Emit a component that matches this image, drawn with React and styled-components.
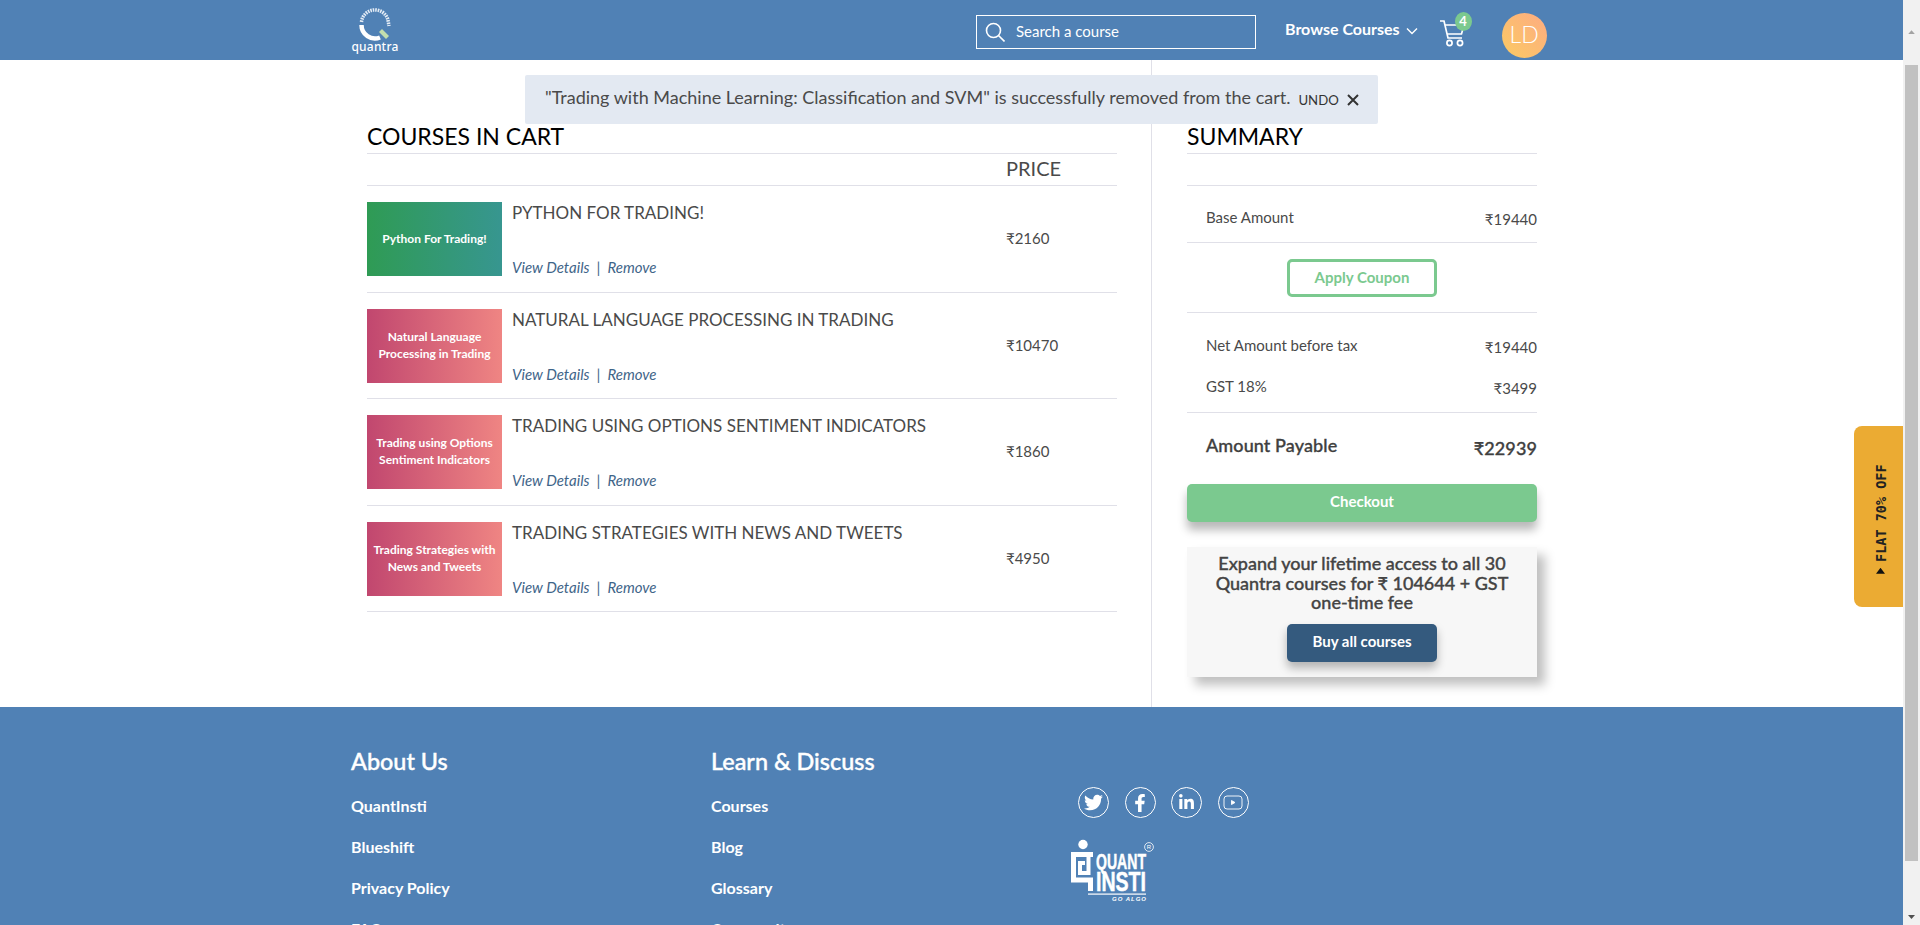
import React from "react";
import styled, { createGlobalStyle } from "styled-components";
import { FaTwitter, FaFacebookF, FaLinkedinIn } from "react-icons/fa";

const courses = [
  { thumb: "Python For Trading!", title: "PYTHON FOR TRADING!", price: "₹2160", green: true },
  { thumb: "Natural Language Processing in Trading", title: "NATURAL LANGUAGE PROCESSING IN TRADING", price: "₹10470" },
  { thumb: "Trading using Options Sentiment Indicators", title: "TRADING USING OPTIONS SENTIMENT INDICATORS", price: "₹1860" },
  { thumb: "Trading Strategies with News and Tweets", title: "TRADING STRATEGIES WITH NEWS AND TWEETS", price: "₹4950" },
];

const aboutLinks = ["QuantInsti", "Blueshift", "Privacy Policy", "FAQs"];
const learnLinks = ["Courses", "Blog", "Glossary", "Community"];

export default function App() {
  return (
    <>
      <GlobalStyle />
      <Page>
        <Header>
          <Logo>
            <svg width="34" height="33" viewBox="0 0 34 33" fill="none">
              <path d="M3.5 14 A13.5 13.5 0 0 1 30 12 L31 18" stroke="#e4ecf5" strokeWidth="3.5" strokeDasharray="1.6 0.9" />
              <path d="M3.5 17 A13.5 13.5 0 0 0 22 29.5" stroke="#fff" strokeWidth="4.5" />
              <path d="M24 21 l7 7 l-3 3 l-7 -7 z" fill="#c3dfae" />
            </svg>
            <LogoText>quantra</LogoText>
          </Logo>
          <SearchBox>
            <svg width="20" height="20" viewBox="0 0 20 20" fill="none" stroke="#fff" strokeWidth="1.6">
              <circle cx="8.5" cy="8.5" r="7" />
              <path d="M13.5 13.5l6 6" />
            </svg>
            <span>Search a course</span>
          </SearchBox>
          <Browse>
            Browse Courses
            <svg width="12" height="8" viewBox="0 0 12 8" fill="none" stroke="#fff" strokeWidth="1.4">
              <path d="M1 1.5l5 5 5-5" />
            </svg>
          </Browse>
          <Cart>
            <svg width="26" height="30" viewBox="0 0 26 30" fill="none" stroke="#fff" strokeWidth="1.7">
              <path d="M0 3h4l4 17h14" />
              <path d="M5 7h19l-2.5 9H7" />
              <circle cx="9.5" cy="25" r="2.6" />
              <circle cx="20" cy="25" r="2.6" />
            </svg>
            <Badge>4</Badge>
          </Cart>
          <Avatar>LD</Avatar>
        </Header>

        <Toast>
          <span>"Trading with Machine Learning: Classification and SVM" is successfully removed from the cart.</span>
          <Undo>UNDO</Undo>
          <svg width="12" height="12" viewBox="0 0 12 12" stroke="#333" strokeWidth="2">
            <path d="M1 1l10 10M11 1L1 11" />
          </svg>
        </Toast>

        <Main>
          <CartColumn>
            <SectionTitle>COURSES IN CART</SectionTitle>
            <PriceHead>PRICE</PriceHead>
            {courses.map((c) => (
              <CourseRow key={c.title}>
                <Thumb $green={c.green}>{c.thumb}</Thumb>
                <CourseInfo>
                  <CourseTitle>{c.title}</CourseTitle>
                  <CourseLinks>
                    View Details<Sep>|</Sep>Remove
                  </CourseLinks>
                </CourseInfo>
                <Price>{c.price}</Price>
              </CourseRow>
            ))}
          </CartColumn>

          <SummaryColumn>
            <SectionTitle>SUMMARY</SectionTitle>
            <SummaryGap />
            <SummaryBlock $h={57} $top={21}>
              <SummaryRow>
                <span>Base Amount</span>
                <Amount>₹19440</Amount>
              </SummaryRow>
            </SummaryBlock>
            <CouponBlock>
              <CouponButton>Apply Coupon</CouponButton>
            </CouponBlock>
            <SummaryBlock $h={100} $top={22}>
              <SummaryRow>
                <span>Net Amount before tax</span>
                <Amount>₹19440</Amount>
              </SummaryRow>
              <SummaryRow>
                <span>GST 18%</span>
                <Amount>₹3499</Amount>
              </SummaryRow>
            </SummaryBlock>
            <PayableRow>
              <span>Amount Payable</span>
              <PayableAmount>₹22939</PayableAmount>
            </PayableRow>
            <Checkout>Checkout</Checkout>
            <UpsellCard>
              <UpsellText>Expand your lifetime access to all 30 Quantra courses for ₹ 104644 + GST one-time fee</UpsellText>
              <BuyAll>Buy all courses</BuyAll>
            </UpsellCard>
          </SummaryColumn>
        </Main>

        <Footer>
          <FooterColumn>
            <FooterTitle>About Us</FooterTitle>
            {aboutLinks.map((l) => (
              <FooterLink key={l}>{l}</FooterLink>
            ))}
          </FooterColumn>
          <FooterColumn>
            <FooterTitle>Learn &amp; Discuss</FooterTitle>
            {learnLinks.map((l) => (
              <FooterLink key={l}>{l}</FooterLink>
            ))}
          </FooterColumn>
          <FooterSide>
            <Socials>
              <Social><FaTwitter size={19} /></Social>
              <Social><FaFacebookF size={18} /></Social>
              <Social><FaLinkedinIn size={17} /></Social>
              <Social>
                <svg width="20" height="15" viewBox="0 0 20 15" fill="none" stroke="#fff" strokeWidth="0.9">
                  <rect x="1" y="1" width="18" height="13" rx="3" />
                  <path d="M8.5 5.5l3.5 2-3.5 2z" fill="#fff" />
                </svg>
              </Social>
            </Socials>
            <svg width="85" height="63" viewBox="0 0 85 63">
              <circle cx="12" cy="5.5" r="4.7" fill="#fff" />
              <path d="M22 15.5H2.5V41H19.5V52" fill="none" stroke="#fff" strokeWidth="5" />
              <path d="M14 24H9V34H17.5V17" fill="none" stroke="#fff" strokeWidth="4" />
              <circle cx="78" cy="8" r="4.4" fill="none" stroke="#fff" strokeWidth="0.8" />
              <text x="78" y="10" fontSize="6" fill="#fff" textAnchor="middle" fontFamily="Liberation Sans">R</text>
              <text x="25" y="30" fontSize="22" fontWeight="700" fill="#fff" stroke="#fff" strokeWidth="0.5" textLength="50" lengthAdjust="spacingAndGlyphs" fontFamily="Liberation Sans">QUANT</text>
              <text x="25" y="52" fontSize="27" fontWeight="700" fill="#fff" stroke="#fff" strokeWidth="0.5" textLength="50" lengthAdjust="spacingAndGlyphs" fontFamily="Liberation Sans">INSTI</text>
              <rect x="17" y="54.5" width="58" height="1.2" fill="#fff" />
              <text x="41" y="62" fontSize="6" fontWeight="700" fontStyle="italic" fill="#fff" textLength="34" fontFamily="Liberation Sans">GO ALGO</text>
            </svg>
          </FooterSide>
        </Footer>

        <OfferTab>
          <OfferArrow />
          FLAT 70% OFF
        </OfferTab>
        <ScrollTrack>
          <ScrollArrow $up />
          <ScrollThumb />
          <ScrollArrow />
        </ScrollTrack>
      </Page>
    </>
  );
}

const GlobalStyle = createGlobalStyle`
  html, body {
    margin: 0;
    padding: 0;
    height: 100%;
    overflow: hidden;
    background: #fff;
  }
  * {
    box-sizing: border-box;
  }
  body {
    font-family: Lato, "Liberation Sans", sans-serif;
    color: #4a4a4a;
  }
`;

const Page = styled.div`
  position: relative;
  width: 1903px;
  height: 925px;
  overflow: hidden;
`;

const Header = styled.header`
  height: 60px;
  background: #5081b5;
  display: flex;
  align-items: center;
  padding-left: 352px;
  color: #fff;
`;

const Logo = styled.div`
  width: 46px;
  display: flex;
  flex-direction: column;
  align-items: center;
  margin-right: 578px;
`;

const LogoText = styled.div`
  font-family: "Noto Sans", sans-serif;
  font-size: 12px;
  font-weight: 500;
  line-height: 12px;
  letter-spacing: 0.2px;
`;

const SearchBox = styled.div`
  width: 280px;
  height: 34px;
  border: 1px solid #fff;
  display: flex;
  align-items: center;
  gap: 11px;
  padding: 0 0 0 8px;
  font-size: 15px;
  margin-right: 29px;
  margin-top: 4px;
  span {
    margin-bottom: 2px;
  }
`;

const Browse = styled.div`
  display: flex;
  align-items: center;
  gap: 6px;
  font-size: 16px;
  font-weight: 700;
  margin-right: 22px;
  margin-bottom: 4px;
  svg {
    margin-top: 5px;
  }
`;

const Cart = styled.div`
  position: relative;
  width: 26px;
  height: 30px;
  margin-right: 36px;
  margin-top: 6px;
`;

const Badge = styled.div`
  position: absolute;
  left: 15px;
  top: -6px;
  width: 17px;
  height: 19px;
  border-radius: 50%;
  background: #7bc98f;
  color: #fff;
  font-size: 13px;
  font-weight: 700;
  line-height: 18px;
  text-align: center;
`;

const Avatar = styled.div`
  width: 45px;
  height: 45px;
  margin-top: 11px;
  padding-bottom: 4px;
  border-radius: 50%;
  background: linear-gradient(45deg, #fbcb63, #fdab82);
  display: flex;
  align-items: center;
  justify-content: center;
  font-size: 23px;
  font-weight: 300;
`;

const Toast = styled.div`
  position: absolute;
  left: 525px;
  top: 75px;
  width: 853px;
  height: 49px;
  border-radius: 2px;
  background: #e3e9f2;
  display: flex;
  align-items: center;
  padding: 0 0 5px 20px;
  font-size: 18px;
  color: #4a4a4a;
  svg {
    margin-left: 8px;
    margin-top: 5px;
  }
`;

const Undo = styled.span`
  font-size: 13.2px;
  color: #333;
  margin-left: 8px;
  margin-top: 5px;
`;

const Main = styled.main`
  height: 647px;
  display: flex;
  padding-left: 367px;
`;

const CartColumn = styled.section`
  width: 750px;
  padding-top: 62px;
`;

const SummaryColumn = styled.section`
  width: 386px;
  margin-left: 34px;
  border-left: 1px solid #e0e0e8;
  padding: 62px 0 0 35px;
`;

const SectionTitle = styled.h2`
  margin: 0;
  height: 32px;
  line-height: 29px;
  font-size: 23px;
  font-weight: 400;
  color: #000;
  border-bottom: 1px solid #e0e0e8;
`;

const PriceHead = styled.div`
  height: 32px;
  line-height: 29px;
  padding-left: 639px;
  font-size: 20px;
  border-bottom: 1px solid #e0e0e8;
`;

const CourseRow = styled.div`
  height: 106.6px;
  display: flex;
  padding-top: 16px;
  border-bottom: 1px solid #e0e0e8;
`;

const Thumb = styled.div`
  width: 135px;
  height: 74px;
  flex: none;
  display: flex;
  align-items: center;
  justify-content: center;
  text-align: center;
  padding: 0 6px 2px;
  color: #fff;
  font-size: 12px;
  font-weight: 700;
  line-height: 17px;
  background: ${(p) =>
    p.$green
      ? "linear-gradient(90deg, #2f9b54, #379690)"
      : "linear-gradient(90deg, #c1476f, #ef8583)"};
`;

const CourseInfo = styled.div`
  width: 504px;
  height: 74px;
  padding-left: 10px;
  display: flex;
  flex-direction: column;
  justify-content: space-between;
`;

const CourseTitle = styled.div`
  font-size: 17px;
  line-height: 21px;
`;

const CourseLinks = styled.div`
  font-size: 15px;
  font-style: italic;
  color: #3f6589;
  line-height: 18px;
`;

const Sep = styled.span`
  margin: 0 7px;
`;

const Price = styled.div`
  font-size: 15px;
  line-height: 72px;
`;

const SummaryGap = styled.div`
  height: 32px;
  border-bottom: 1px solid #e0e0e8;
`;

const SummaryBlock = styled.div`
  height: ${(p) => p.$h}px;
  padding: ${(p) => p.$top}px 0 0 19px;
  border-bottom: 1px solid #e0e0e8;
  display: flex;
  flex-direction: column;
  gap: 19px;
`;

const SummaryRow = styled.div`
  display: flex;
  justify-content: space-between;
  font-size: 15px;
  line-height: 20px;
`;

const Amount = styled.span`
  margin-top: 2px;
`;

const CouponBlock = styled.div`
  height: 70px;
  display: flex;
  justify-content: center;
  padding-top: 16px;
  border-bottom: 1px solid #e0e0e8;
`;

const CouponButton = styled.div`
  width: 150px;
  height: 38px;
  border: 3px solid #7bc98f;
  border-radius: 5px;
  color: #7bc98f;
  font-size: 15px;
  font-weight: 700;
  text-align: center;
  line-height: 30px;
`;

const PayableRow = styled.div`
  height: 71px;
  display: flex;
  justify-content: space-between;
  align-items: flex-start;
  padding: 21px 0 0 19px;
  font-size: 18px;
  font-weight: 500;
  letter-spacing: 0.1px;
  color: #3f3f3f;
  line-height: 22px;
  -webkit-text-stroke: 0.35px currentColor;
`;

const PayableAmount = styled.span`
  margin-top: 3px;
`;

const Checkout = styled.div`
  height: 38px;
  border-radius: 5px;
  background: #7bc98f;
  color: #fff;
  font-size: 15px;
  font-weight: 700;
  line-height: 35px;
  text-align: center;
  box-shadow: 0 8px 10px rgba(0, 0, 0, 0.28);
`;

const UpsellCard = styled.div`
  margin-top: 25px;
  height: 130px;
  background: #f7f7f7;
  box-shadow: 8px 8px 10px rgba(0, 0, 0, 0.25);
  display: flex;
  flex-direction: column;
  align-items: center;
  padding-top: 7px;
`;

const UpsellText = styled.div`
  width: 310px;
  text-align: center;
  font-size: 18px;
  font-weight: 500;
  line-height: 19.5px;
  color: #444;
  -webkit-text-stroke: 0.35px currentColor;
`;

const BuyAll = styled.div`
  width: 150px;
  height: 38px;
  margin-top: 11.5px;
  border-radius: 5px;
  background: #345a7e;
  color: #fff;
  font-size: 15px;
  font-weight: 700;
  line-height: 34px;
  text-align: center;
  box-shadow: 0 6px 10px rgba(0, 0, 0, 0.28);
`;

const Footer = styled.footer`
  height: 218px;
  background: #5081b5;
  color: #fff;
  display: flex;
  padding: 40px 0 0 351px;
`;

const FooterColumn = styled.div`
  width: 360px;
  display: flex;
  flex-direction: column;
`;

const FooterTitle = styled.div`
  font-size: 23.4px;
  font-weight: 500;
  line-height: 28px;
  margin-bottom: 21px;
  -webkit-text-stroke: 0.4px currentColor;
`;

const FooterLink = styled.div`
  font-size: 16px;
  font-weight: 700;
  line-height: 20px;
  margin-bottom: 21px;
`;

const FooterSide = styled.div`
  padding-top: 40px;
  svg {
    display: block;
  }
`;

const Socials = styled.div`
  display: flex;
  gap: 15.5px;
  margin: 0 0 21px 7px;
`;

const Social = styled.div`
  width: 31px;
  height: 31px;
  border: 1.5px solid #fff;
  border-radius: 50%;
  display: flex;
  align-items: center;
  justify-content: center;
`;

const OfferTab = styled.div`
  position: absolute;
  left: 1854px;
  top: 426px;
  width: 49px;
  height: 181px;
  padding: 0 4px 5px 0;
  background: #ebab33;
  border-radius: 0 8px 8px 0;
  display: flex;
  align-items: center;
  justify-content: center;
  gap: 6px;
  writing-mode: vertical-rl;
  transform: rotate(180deg);
  font-family: "DejaVu Sans Mono", monospace;
  font-size: 13.5px;
  font-weight: 700;
  color: #222;
`;

const OfferArrow = styled.span`
  width: 9px;
  height: 6px;
  background: #111;
  clip-path: polygon(0 0, 100% 0, 50% 100%);
`;

const ScrollTrack = styled.div`
  position: fixed;
  left: 1903px;
  top: 0;
  width: 17px;
  height: 925px;
  background: #f1f1f1;
  display: flex;
  flex-direction: column;
`;

const ScrollArrow = styled.div`
  flex: 1;
  display: flex;
  align-items: center;
  justify-content: center;
  min-height: 17px;
  &::after {
    content: "";
    width: 7px;
    height: 4px;
    background: ${(p) => (p.$up ? "#a3a3a3" : "#505050")};
    clip-path: ${(p) =>
      p.$up ? "polygon(50% 0, 100% 100%, 0 100%)" : "polygon(0 0, 100% 0, 50% 100%)"};
    align-self: ${(p) => (p.$up ? "center" : "flex-end")};
    margin-bottom: ${(p) => (p.$up ? "0" : "6px")};
  }
`;

const ScrollThumb = styled.div`
  flex: none;
  margin-left: 2px;
  width: 13px;
  height: 796px;
  background: #c1c1c1;
`;
